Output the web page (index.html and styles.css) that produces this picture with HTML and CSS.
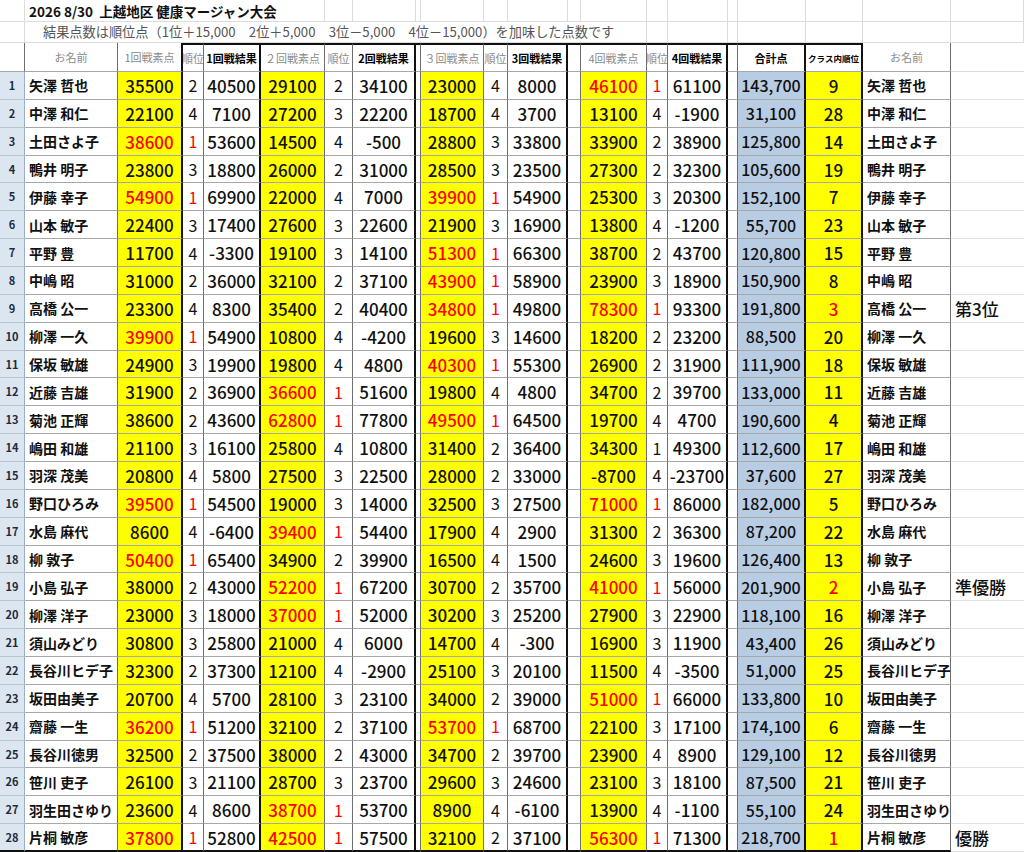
FILE: index.html
```html
<!DOCTYPE html>
<html lang="ja">
<head>
<meta charset="utf-8">
<title>上越地区 健康マージャン大会</title>
<link rel="stylesheet" href="styles.css">
</head>
<body>
<div class="sheet">
<div class="row title"><span></span><span class="tt">2026 8/30&nbsp; 上越地区 健康マージャン大会</span><span></span><span></span><span></span><span></span><span></span><span></span><span></span><span></span><span></span><span></span><span></span><span></span><span></span><span></span><span></span></div>
<div class="row sub"><span></span><span class="st">結果点数は順位点（1位＋15,000　2位＋5,000　3位－5,000　4位－15,000）を加味した点数です</span><span></span><span></span><span></span><span></span><span></span><span></span><span></span></div>
<div class="row head"><span></span><span class="g">お名前</span><span class="g">1回戦素点</span><span class="g">順位</span><span class="k">1回戦結果</span><span class="g">２回戦素点</span><span class="g">順位</span><span class="k">2回戦結果</span><span></span><span class="g">３回戦素点</span><span class="g">順位</span><span class="k">3回戦結果</span><span></span><span class="g">4回戦素点</span><span class="g">順位</span><span class="k">4回戦結果</span><span></span><span class="k">合計点</span><span class="k sm">クラス内順位</span><span class="g">お名前</span><span></span></div>
<div class="row data"><span>1</span><span>矢澤 哲也</span><span>35500</span><span>2</span><span>40500</span><span>29100</span><span>2</span><span>34100</span><span></span><span>23000</span><span>4</span><span>8000</span><span></span><span class="r">46100</span><span class="r">1</span><span>61100</span><span></span><span>143,700</span><span>9</span><span>矢澤 哲也</span><span></span></div>
<div class="row data"><span>2</span><span>中澤 和仁</span><span>22100</span><span>4</span><span>7100</span><span>27200</span><span>3</span><span>22200</span><span></span><span>18700</span><span>4</span><span>3700</span><span></span><span>13100</span><span>4</span><span>-1900</span><span></span><span>31,100</span><span>28</span><span>中澤 和仁</span><span></span></div>
<div class="row data"><span>3</span><span>土田さよ子</span><span class="r">38600</span><span class="r">1</span><span>53600</span><span>14500</span><span>4</span><span>-500</span><span></span><span>28800</span><span>3</span><span>33800</span><span></span><span>33900</span><span>2</span><span>38900</span><span></span><span>125,800</span><span>14</span><span>土田さよ子</span><span></span></div>
<div class="row data"><span>4</span><span>鴨井 明子</span><span>23800</span><span>3</span><span>18800</span><span>26000</span><span>2</span><span>31000</span><span></span><span>28500</span><span>3</span><span>23500</span><span></span><span>27300</span><span>2</span><span>32300</span><span></span><span>105,600</span><span>19</span><span>鴨井 明子</span><span></span></div>
<div class="row data"><span>5</span><span>伊藤 幸子</span><span class="r">54900</span><span class="r">1</span><span>69900</span><span>22000</span><span>4</span><span>7000</span><span></span><span class="r">39900</span><span class="r">1</span><span>54900</span><span></span><span>25300</span><span>3</span><span>20300</span><span></span><span>152,100</span><span>7</span><span>伊藤 幸子</span><span></span></div>
<div class="row data"><span>6</span><span>山本 敏子</span><span>22400</span><span>3</span><span>17400</span><span>27600</span><span>3</span><span>22600</span><span></span><span>21900</span><span>3</span><span>16900</span><span></span><span>13800</span><span>4</span><span>-1200</span><span></span><span>55,700</span><span>23</span><span>山本 敏子</span><span></span></div>
<div class="row data"><span>7</span><span>平野 豊</span><span>11700</span><span>4</span><span>-3300</span><span>19100</span><span>3</span><span>14100</span><span></span><span class="r">51300</span><span class="r">1</span><span>66300</span><span></span><span>38700</span><span>2</span><span>43700</span><span></span><span>120,800</span><span>15</span><span>平野 豊</span><span></span></div>
<div class="row data"><span>8</span><span>中嶋 昭</span><span>31000</span><span>2</span><span>36000</span><span>32100</span><span>2</span><span>37100</span><span></span><span class="r">43900</span><span class="r">1</span><span>58900</span><span></span><span>23900</span><span>3</span><span>18900</span><span></span><span>150,900</span><span>8</span><span>中嶋 昭</span><span></span></div>
<div class="row data"><span>9</span><span>高橋 公一</span><span>23300</span><span>4</span><span>8300</span><span>35400</span><span>2</span><span>40400</span><span></span><span class="r">34800</span><span class="r">1</span><span>49800</span><span></span><span class="r">78300</span><span class="r">1</span><span>93300</span><span></span><span>191,800</span><span class="r">3</span><span>高橋 公一</span><span>第3位</span></div>
<div class="row data"><span>10</span><span>柳澤 一久</span><span class="r">39900</span><span class="r">1</span><span>54900</span><span>10800</span><span>4</span><span>-4200</span><span></span><span>19600</span><span>3</span><span>14600</span><span></span><span>18200</span><span>2</span><span>23200</span><span></span><span>88,500</span><span>20</span><span>柳澤 一久</span><span></span></div>
<div class="row data"><span>11</span><span>保坂 敏雄</span><span>24900</span><span>3</span><span>19900</span><span>19800</span><span>4</span><span>4800</span><span></span><span class="r">40300</span><span class="r">1</span><span>55300</span><span></span><span>26900</span><span>2</span><span>31900</span><span></span><span>111,900</span><span>18</span><span>保坂 敏雄</span><span></span></div>
<div class="row data"><span>12</span><span>近藤 吉雄</span><span>31900</span><span>2</span><span>36900</span><span class="r">36600</span><span class="r">1</span><span>51600</span><span></span><span>19800</span><span>4</span><span>4800</span><span></span><span>34700</span><span>2</span><span>39700</span><span></span><span>133,000</span><span>11</span><span>近藤 吉雄</span><span></span></div>
<div class="row data"><span>13</span><span>菊池 正輝</span><span>38600</span><span>2</span><span>43600</span><span class="r">62800</span><span class="r">1</span><span>77800</span><span></span><span class="r">49500</span><span class="r">1</span><span>64500</span><span></span><span>19700</span><span>4</span><span>4700</span><span></span><span>190,600</span><span>4</span><span>菊池 正輝</span><span></span></div>
<div class="row data"><span>14</span><span>嶋田 和雄</span><span>21100</span><span>3</span><span>16100</span><span>25800</span><span>4</span><span>10800</span><span></span><span>31400</span><span>2</span><span>36400</span><span></span><span>34300</span><span>1</span><span>49300</span><span></span><span>112,600</span><span>17</span><span>嶋田 和雄</span><span></span></div>
<div class="row data"><span>15</span><span>羽深 茂美</span><span>20800</span><span>4</span><span>5800</span><span>27500</span><span>3</span><span>22500</span><span></span><span>28000</span><span>2</span><span>33000</span><span></span><span>-8700</span><span>4</span><span>-23700</span><span></span><span>37,600</span><span>27</span><span>羽深 茂美</span><span></span></div>
<div class="row data"><span>16</span><span>野口ひろみ</span><span class="r">39500</span><span class="r">1</span><span>54500</span><span>19000</span><span>3</span><span>14000</span><span></span><span>32500</span><span>3</span><span>27500</span><span></span><span class="r">71000</span><span class="r">1</span><span>86000</span><span></span><span>182,000</span><span>5</span><span>野口ひろみ</span><span></span></div>
<div class="row data"><span>17</span><span>水島 麻代</span><span>8600</span><span>4</span><span>-6400</span><span class="r">39400</span><span class="r">1</span><span>54400</span><span></span><span>17900</span><span>4</span><span>2900</span><span></span><span>31300</span><span>2</span><span>36300</span><span></span><span>87,200</span><span>22</span><span>水島 麻代</span><span></span></div>
<div class="row data"><span>18</span><span>柳 敦子</span><span class="r">50400</span><span class="r">1</span><span>65400</span><span>34900</span><span>2</span><span>39900</span><span></span><span>16500</span><span>4</span><span>1500</span><span></span><span>24600</span><span>3</span><span>19600</span><span></span><span>126,400</span><span>13</span><span>柳 敦子</span><span></span></div>
<div class="row data"><span>19</span><span>小島 弘子</span><span>38000</span><span>2</span><span>43000</span><span class="r">52200</span><span class="r">1</span><span>67200</span><span></span><span>30700</span><span>2</span><span>35700</span><span></span><span class="r">41000</span><span class="r">1</span><span>56000</span><span></span><span>201,900</span><span class="r">2</span><span>小島 弘子</span><span>準優勝</span></div>
<div class="row data"><span>20</span><span>柳澤 洋子</span><span>23000</span><span>3</span><span>18000</span><span class="r">37000</span><span class="r">1</span><span>52000</span><span></span><span>30200</span><span>3</span><span>25200</span><span></span><span>27900</span><span>3</span><span>22900</span><span></span><span>118,100</span><span>16</span><span>柳澤 洋子</span><span></span></div>
<div class="row data"><span>21</span><span>須山みどり</span><span>30800</span><span>3</span><span>25800</span><span>21000</span><span>4</span><span>6000</span><span></span><span>14700</span><span>4</span><span>-300</span><span></span><span>16900</span><span>3</span><span>11900</span><span></span><span>43,400</span><span>26</span><span>須山みどり</span><span></span></div>
<div class="row data"><span>22</span><span>長谷川ヒデ子</span><span>32300</span><span>2</span><span>37300</span><span>12100</span><span>4</span><span>-2900</span><span></span><span>25100</span><span>3</span><span>20100</span><span></span><span>11500</span><span>4</span><span>-3500</span><span></span><span>51,000</span><span>25</span><span>長谷川ヒデ子</span><span></span></div>
<div class="row data"><span>23</span><span>坂田由美子</span><span>20700</span><span>4</span><span>5700</span><span>28100</span><span>3</span><span>23100</span><span></span><span>34000</span><span>2</span><span>39000</span><span></span><span class="r">51000</span><span class="r">1</span><span>66000</span><span></span><span>133,800</span><span>10</span><span>坂田由美子</span><span></span></div>
<div class="row data"><span>24</span><span>齋藤 一生</span><span class="r">36200</span><span class="r">1</span><span>51200</span><span>32100</span><span>2</span><span>37100</span><span></span><span class="r">53700</span><span class="r">1</span><span>68700</span><span></span><span>22100</span><span>3</span><span>17100</span><span></span><span>174,100</span><span>6</span><span>齋藤 一生</span><span></span></div>
<div class="row data"><span>25</span><span>長谷川徳男</span><span>32500</span><span>2</span><span>37500</span><span>38000</span><span>2</span><span>43000</span><span></span><span>34700</span><span>2</span><span>39700</span><span></span><span>23900</span><span>4</span><span>8900</span><span></span><span>129,100</span><span>12</span><span>長谷川徳男</span><span></span></div>
<div class="row data"><span>26</span><span>笹川 吏子</span><span>26100</span><span>3</span><span>21100</span><span>28700</span><span>3</span><span>23700</span><span></span><span>29600</span><span>3</span><span>24600</span><span></span><span>23100</span><span>3</span><span>18100</span><span></span><span>87,500</span><span>21</span><span>笹川 吏子</span><span></span></div>
<div class="row data"><span>27</span><span>羽生田さゆり</span><span>23600</span><span>4</span><span>8600</span><span class="r">38700</span><span class="r">1</span><span>53700</span><span></span><span>8900</span><span>4</span><span>-6100</span><span></span><span>13900</span><span>4</span><span>-1100</span><span></span><span>55,100</span><span>24</span><span>羽生田さゆり</span><span></span></div>
<div class="row data last"><span>28</span><span>片桐 敏彦</span><span class="r">37800</span><span class="r">1</span><span>52800</span><span class="r">42500</span><span class="r">1</span><span>57500</span><span></span><span>32100</span><span>2</span><span>37100</span><span></span><span class="r">56300</span><span class="r">1</span><span>71300</span><span></span><span>218,700</span><span class="r">1</span><span>片桐 敏彦</span><span>優勝</span></div>
</div>
</body>
</html>
```

FILE: styles.css
```css
* {
  box-sizing: border-box;
  margin: 0;
  padding: 0;
}

html, body {
  background: #fff;
}

body {
  margin: 0;
  width: 1024px;
  height: 852px;
  overflow: hidden;
  font-family: "Noto Sans CJK JP", "Noto Sans", sans-serif;
  color: #111;
}

.sheet {
  display: flex;
  flex-direction: column;
}

.row {
  display: grid;
  grid-template-columns: 25px 93px 65px 21px 57px 64px 28px 63px 5px 63px 24px 60px 13px 66px 21px 60px 10px 68px 57px 88px 73px;
}

.row > span {
  display: flex;
  align-items: center;
  justify-content: center;
  white-space: nowrap;
  overflow: hidden;
  line-height: 1;
  border-right: 1px solid #6e6e6e;
  border-bottom: 1px solid #a8a8a8;
}

/* title rows */
.title { height: 22px; }
.sub { height: 21px; }

.title > span,
.sub > span {
  border-right-color: #dcdcdc;
  border-bottom-color: #dcdcdc;
}

.tt {
  grid-column: 2 / 7;
  justify-content: flex-start !important;
  padding: 2px 0 0 4px;
  font-size: 13.5px;
  font-weight: 700;
  color: #111;
}

.st {
  grid-column: 2 / 15;
  justify-content: flex-start !important;
  padding-left: 18px;
  font-size: 13.2px;
  font-weight: 400;
  color: #555;
}

/* header row */
.head { height: 29px; }

.head > span {
  font-size: 11px;
}

.head > :nth-child(n+4):nth-child(-n+19) {
  border-top: 2px solid #111;
}

.head > :nth-child(21) {
  border-right: none;
  border-bottom-color: #dcdcdc;
}

.g {
  color: #8a8a8a;
  font-weight: 400;
}

.k {
  color: #000;
  font-weight: 700;
}

.sm {
  font-size: 8.5px !important;
}

/* thick column separators */
.head > :nth-child(3),
.head > :nth-child(5),
.head > :nth-child(8),
.head > :nth-child(12),
.head > :nth-child(16),
.head > :nth-child(18),
.head > :nth-child(19),
.data > :nth-child(3),
.data > :nth-child(5),
.data > :nth-child(8),
.data > :nth-child(12),
.data > :nth-child(16),
.data > :nth-child(18),
.data > :nth-child(19) {
  border-right: 2px solid #111;
}

/* data rows */
.data {
  height: 27.86px;
}

.data > span {
  font-size: 17px;
  font-weight: 500;
}

.data > :nth-child(1) {
  background: #dce6f1;
  border-right-color: #9aaec6;
  border-bottom-color: #b9c5d3;
  font-size: 11px;
  font-weight: 700;
  color: #1f2a3c;
}

.data > :nth-child(2),
.data > :nth-child(20) {
  justify-content: flex-start;
  padding-left: 4px;
  font-size: 14px;
  font-weight: 700;
}

.data > :nth-child(4),
.data > :nth-child(7),
.data > :nth-child(11),
.data > :nth-child(15) {
  font-size: 16px;
  font-weight: 400;
}

.data > :nth-child(3),
.data > :nth-child(6),
.data > :nth-child(10),
.data > :nth-child(14),
.data > :nth-child(19) {
  background: #ffff00;
}

.data > :nth-child(18) {
  background: #b8cce4;
  font-size: 16px;
}

.data > :nth-child(21) {
  justify-content: flex-start;
  padding-left: 4px;
  border-right: none;
  border-bottom-color: #e2e2e2;
  font-size: 17px;
  font-weight: 500;
}

.data > span.r {
  color: #ff0000;
}

.last > span:not(:last-child) {
  border-bottom: 2px solid #111;
}
```
